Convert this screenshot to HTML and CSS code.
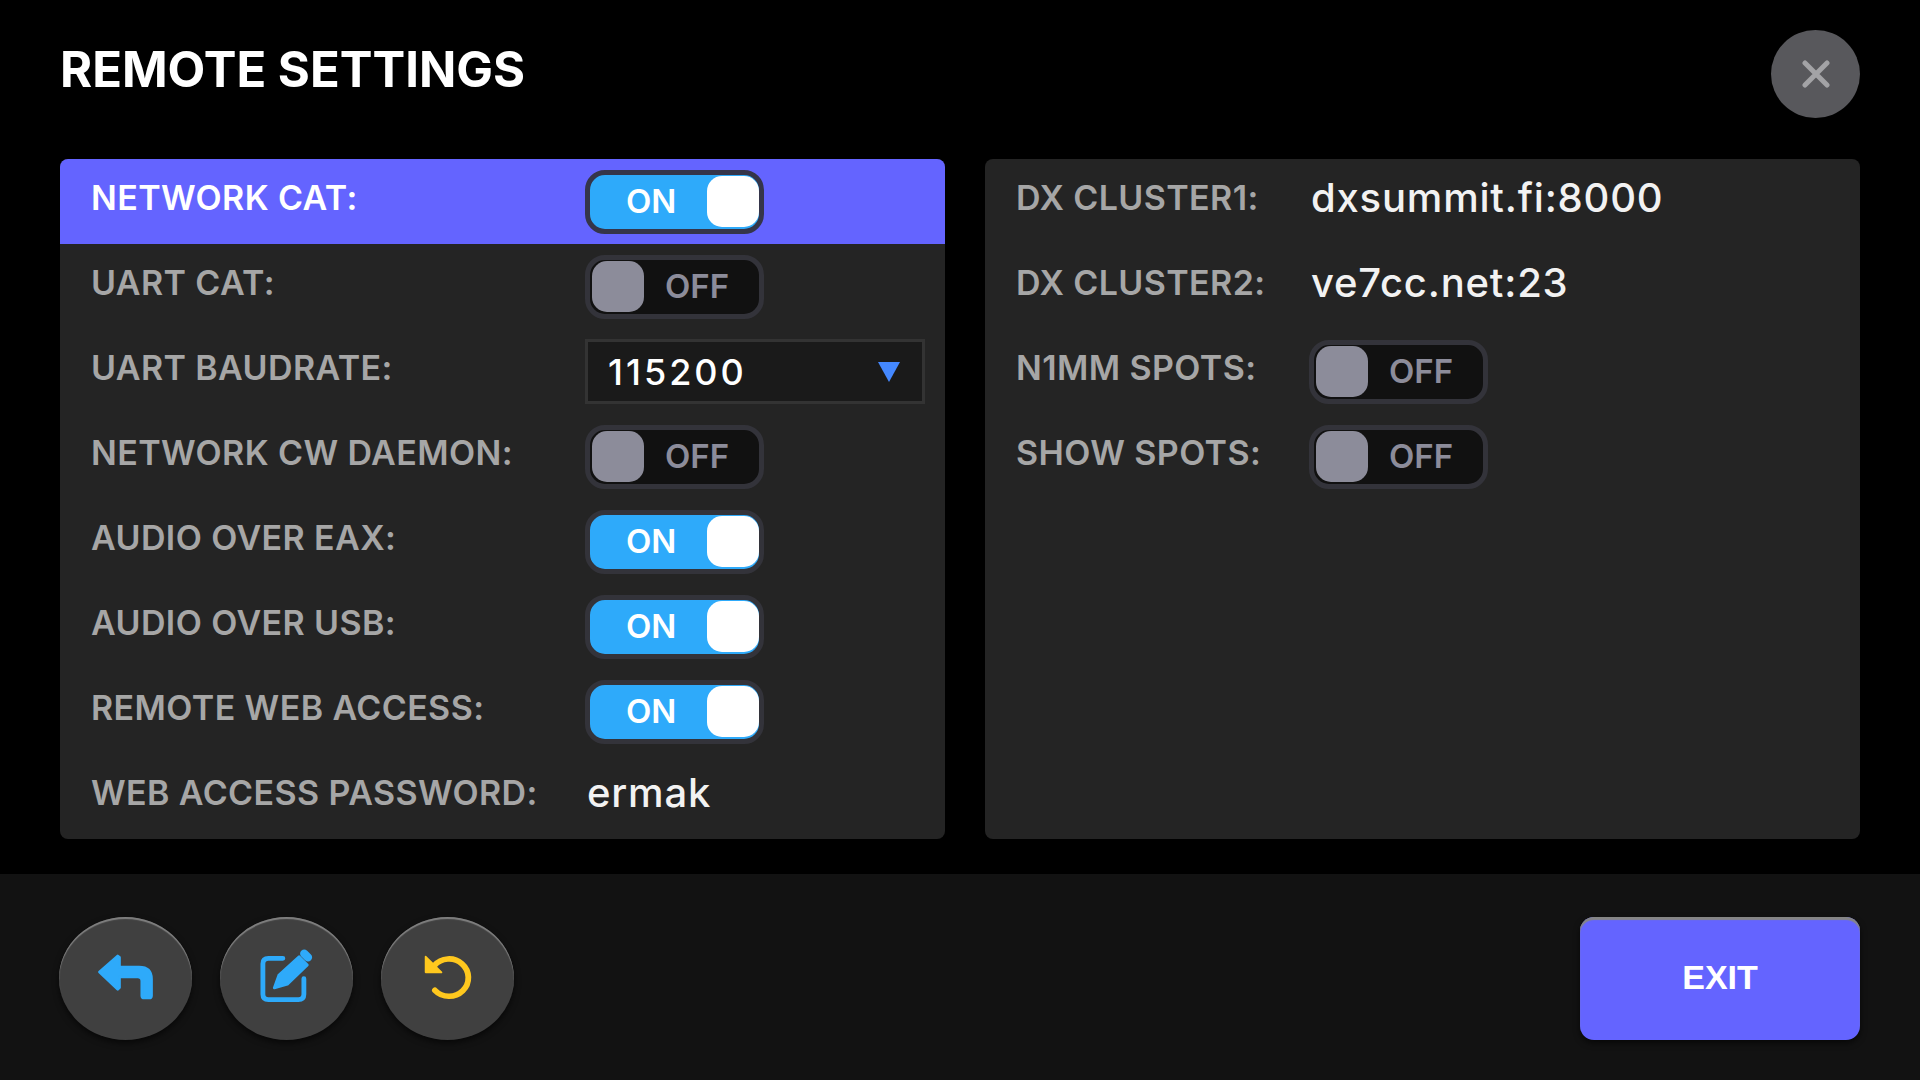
FILE: index.html
```html
<!DOCTYPE html>
<html lang="en">
<head>
  <meta charset="utf-8">
  <title>Remote Settings</title>
  <link rel="stylesheet" href="styles.css">
</head>
<body>
  <div class="screen">
    <header class="top">
      <h1>REMOTE SETTINGS</h1>
      <button class="close-btn" aria-label="Close">
        <svg width="28" height="28" viewBox="0 0 28 28"><path d="M3 3 L25 25 M25 3 L3 25" /></svg>
      </button>
    </header>

    <main class="panels">
      <section class="panel panel-left">
        <div class="row row-active">
          <span class="label">NETWORK CAT:</span>
          <div class="toggle on"><span>ON</span><i></i></div>
        </div>
        <div class="row">
          <span class="label">UART CAT:</span>
          <div class="toggle"><i></i><span>OFF</span></div>
        </div>
        <div class="row">
          <span class="label">UART BAUDRATE:</span>
          <div class="select"><span>115200</span><b class="arrow"></b></div>
        </div>
        <div class="row">
          <span class="label">NETWORK CW DAEMON:</span>
          <div class="toggle"><i></i><span>OFF</span></div>
        </div>
        <div class="row">
          <span class="label">AUDIO OVER EAX:</span>
          <div class="toggle on"><span>ON</span><i></i></div>
        </div>
        <div class="row">
          <span class="label">AUDIO OVER USB:</span>
          <div class="toggle on"><span>ON</span><i></i></div>
        </div>
        <div class="row">
          <span class="label">REMOTE WEB ACCESS:</span>
          <div class="toggle on"><span>ON</span><i></i></div>
        </div>
        <div class="row">
          <span class="label">WEB ACCESS PASSWORD:</span>
          <span class="value">ermak</span>
        </div>
      </section>

      <section class="panel panel-right">
        <div class="row">
          <span class="label">DX CLUSTER1:</span>
          <span class="value">dxsummit.fi:8000</span>
        </div>
        <div class="row">
          <span class="label">DX CLUSTER2:</span>
          <span class="value">ve7cc.net:23</span>
        </div>
        <div class="row">
          <span class="label">N1MM SPOTS:</span>
          <div class="toggle"><i></i><span>OFF</span></div>
        </div>
        <div class="row">
          <span class="label">SHOW SPOTS:</span>
          <div class="toggle"><i></i><span>OFF</span></div>
        </div>
      </section>
    </main>

    <footer class="bottom">
      <div class="round-btns">
        <button class="round-btn" aria-label="Back">
          <svg width="62" height="60" viewBox="0 0 180 180" preserveAspectRatio="none">
            <path class="ico-fill" d="M13 75 L66 27 L71 31 V60 H128 Q164 60 164 96 V146 Q164 153 157 153 H143 Q136 153 136 146 V102 Q136 90 124 90 H71 V122 L66 127 Z" />
          </svg>
        </button>
        <button class="round-btn" aria-label="Edit">
          <svg width="62" height="60" viewBox="0 0 180 180" preserveAspectRatio="none">
            <path class="ico-line" d="M78 34 H36 Q20 34 20 50 V142 Q20 158 36 158 H123 Q139 158 139 142 V95" />
            <path class="ico-fill" d="M53 123 L66 85 L125 29 L149 54 L91 112 Z" />
            <path class="ico-line cap" d="M140 20 L151 31" />
          </svg>
        </button>
        <button class="round-btn" aria-label="Undo">
          <svg width="62" height="60" viewBox="0 0 180 180" preserveAspectRatio="none">
            <path class="ico-undo" d="M52 130 A56 56 0 1 0 50 56" />
            <path class="ico-undo-head" d="M25 29 L71 76 H25 Z" />
          </svg>
        </button>
      </div>
      <button class="exit-btn">EXIT</button>
    </footer>
  </div>
</body>
</html>
```

FILE: styles.css
```css
* {
  box-sizing: border-box;
}
html, body {
  margin: 0;
  padding: 0;
}
body {
  background: #000;
  font-family: Inter, Roboto, "Liberation Sans", sans-serif;
}
button {
  border: none;
  padding: 0;
  cursor: pointer;
}
.screen {
  width: 1920px;
  height: 1080px;
  display: flex;
  flex-direction: column;
  overflow: hidden;
}

/* header */
.top {
  height: 159px;
  padding: 30px 60px 0;
  display: flex;
  justify-content: space-between;
  align-items: flex-start;
}
h1 {
  margin: 12px 0 0;
  color: #fff;
  font-size: 49px;
  line-height: 56px;
  font-weight: 700;
  letter-spacing: 0;
}
.close-btn {
  width: 89px;
  height: 88px;
  border-radius: 50%;
  background: #58585c;
  display: flex;
  align-items: center;
  justify-content: center;
}
.close-btn path {
  stroke: #a3a3a6;
  stroke-width: 5;
  stroke-linecap: round;
  fill: none;
}

/* panels */
.panels {
  display: flex;
  gap: 40px;
  padding: 0 60px;
  height: 680px;
}
.panel {
  background: #242424;
  border-radius: 8px;
  overflow: hidden;
}
.panel-left {
  width: 885px;
}
.panel-right {
  width: 875px;
}
.row {
  height: 85px;
  padding-left: 31px;
  display: grid;
  grid-template-columns: 494px auto;
  justify-content: start;
  align-items: center;
}
.panel-right .row {
  grid-template-columns: 293px auto;
}
.row-active {
  background: #6464ff;
}
.label {
  color: #a6a6a6;
  font-size: 34px;
  font-weight: 600;
  line-height: 40px;
  letter-spacing: 0.4px;
  margin-top: -8px;
  white-space: nowrap;
}
.row-active .label {
  color: #fff;
}
.value {
  color: #f2f2f2;
  font-size: 40px;
  font-weight: 500;
  line-height: 48px;
  letter-spacing: 0.8px;
  margin-top: -7px;
  margin-left: 2px;
  white-space: nowrap;
}

/* switches */
.toggle {
  width: 179px;
  height: 64px;
  border: 5px solid #33333a;
  border-radius: 20px;
  background: #111;
  display: flex;
  align-items: center;
  padding: 0 2px;
  color: #8c8c9a;
  font-size: 33px;
  font-weight: 600;
}
.toggle i {
  width: 52px;
  height: 51px;
  border-radius: 15px;
  background: #8c8c9a;
  flex: none;
}
.toggle span {
  margin: -2px 0 0 21px;
}
.toggle.on {
  background: #2eaafa;
  color: #fff;
  justify-content: space-between;
  padding: 0 0 0 36px;
}
.toggle.on span {
  margin-left: 0;
}
.toggle.on i {
  background: #fff;
}
.row-active .toggle {
  border-color: #35354a;
}

/* dropdown */
.select {
  width: 340px;
  height: 65px;
  border: 3px solid #333;
  background: #1a1a1a;
  display: flex;
  align-items: center;
  justify-content: space-between;
  padding: 0 22px 0 20px;
  color: #fff;
  font-size: 36px;
  font-weight: 500;
  letter-spacing: 3px;
}
.arrow {
  width: 0;
  height: 0;
  border-left: 11px solid transparent;
  border-right: 11px solid transparent;
  border-top: 20px solid #4488ff;
}

/* footer */
.bottom {
  margin-top: 35px;
  flex: 1;
  background: #121212;
  padding: 43px 60px 40px 59px;
  display: flex;
  justify-content: space-between;
  align-items: flex-start;
}
.round-btns {
  display: flex;
  gap: 28px;
}
.round-btn {
  width: 133px;
  height: 123px;
  border-radius: 50%;
  background: #404040;
  box-shadow: inset 0 2px 1px #808080, 0 3px 6px rgba(0,0,0,0.6);
  display: flex;
  align-items: center;
  justify-content: center;
  padding-bottom: 3px;
}
.ico-fill {
  fill: #2eaafa;
  stroke: #2eaafa;
  stroke-width: 8;
  stroke-linejoin: round;
}
.ico-line {
  fill: none;
  stroke: #2eaafa;
  stroke-width: 14;
  stroke-linecap: round;
}
.ico-line.cap {
  stroke-width: 24;
}
.ico-undo {
  fill: none;
  stroke: #ffc81e;
  stroke-width: 17;
  stroke-linecap: round;
}
.ico-undo-head {
  fill: #ffc81e;
  stroke: #ffc81e;
  stroke-width: 5;
  stroke-linejoin: round;
}
.exit-btn {
  width: 280px;
  height: 123px;
  border-radius: 14px;
  background: #6464ff;
  box-shadow: inset 0 3px 1px #858585, 0 3px 6px rgba(0,0,0,0.6);
  color: #fff;
  font-family: "Liberation Sans", Arial, sans-serif;
  font-size: 34px;
  font-weight: 700;
  padding-bottom: 3px;
}
```
